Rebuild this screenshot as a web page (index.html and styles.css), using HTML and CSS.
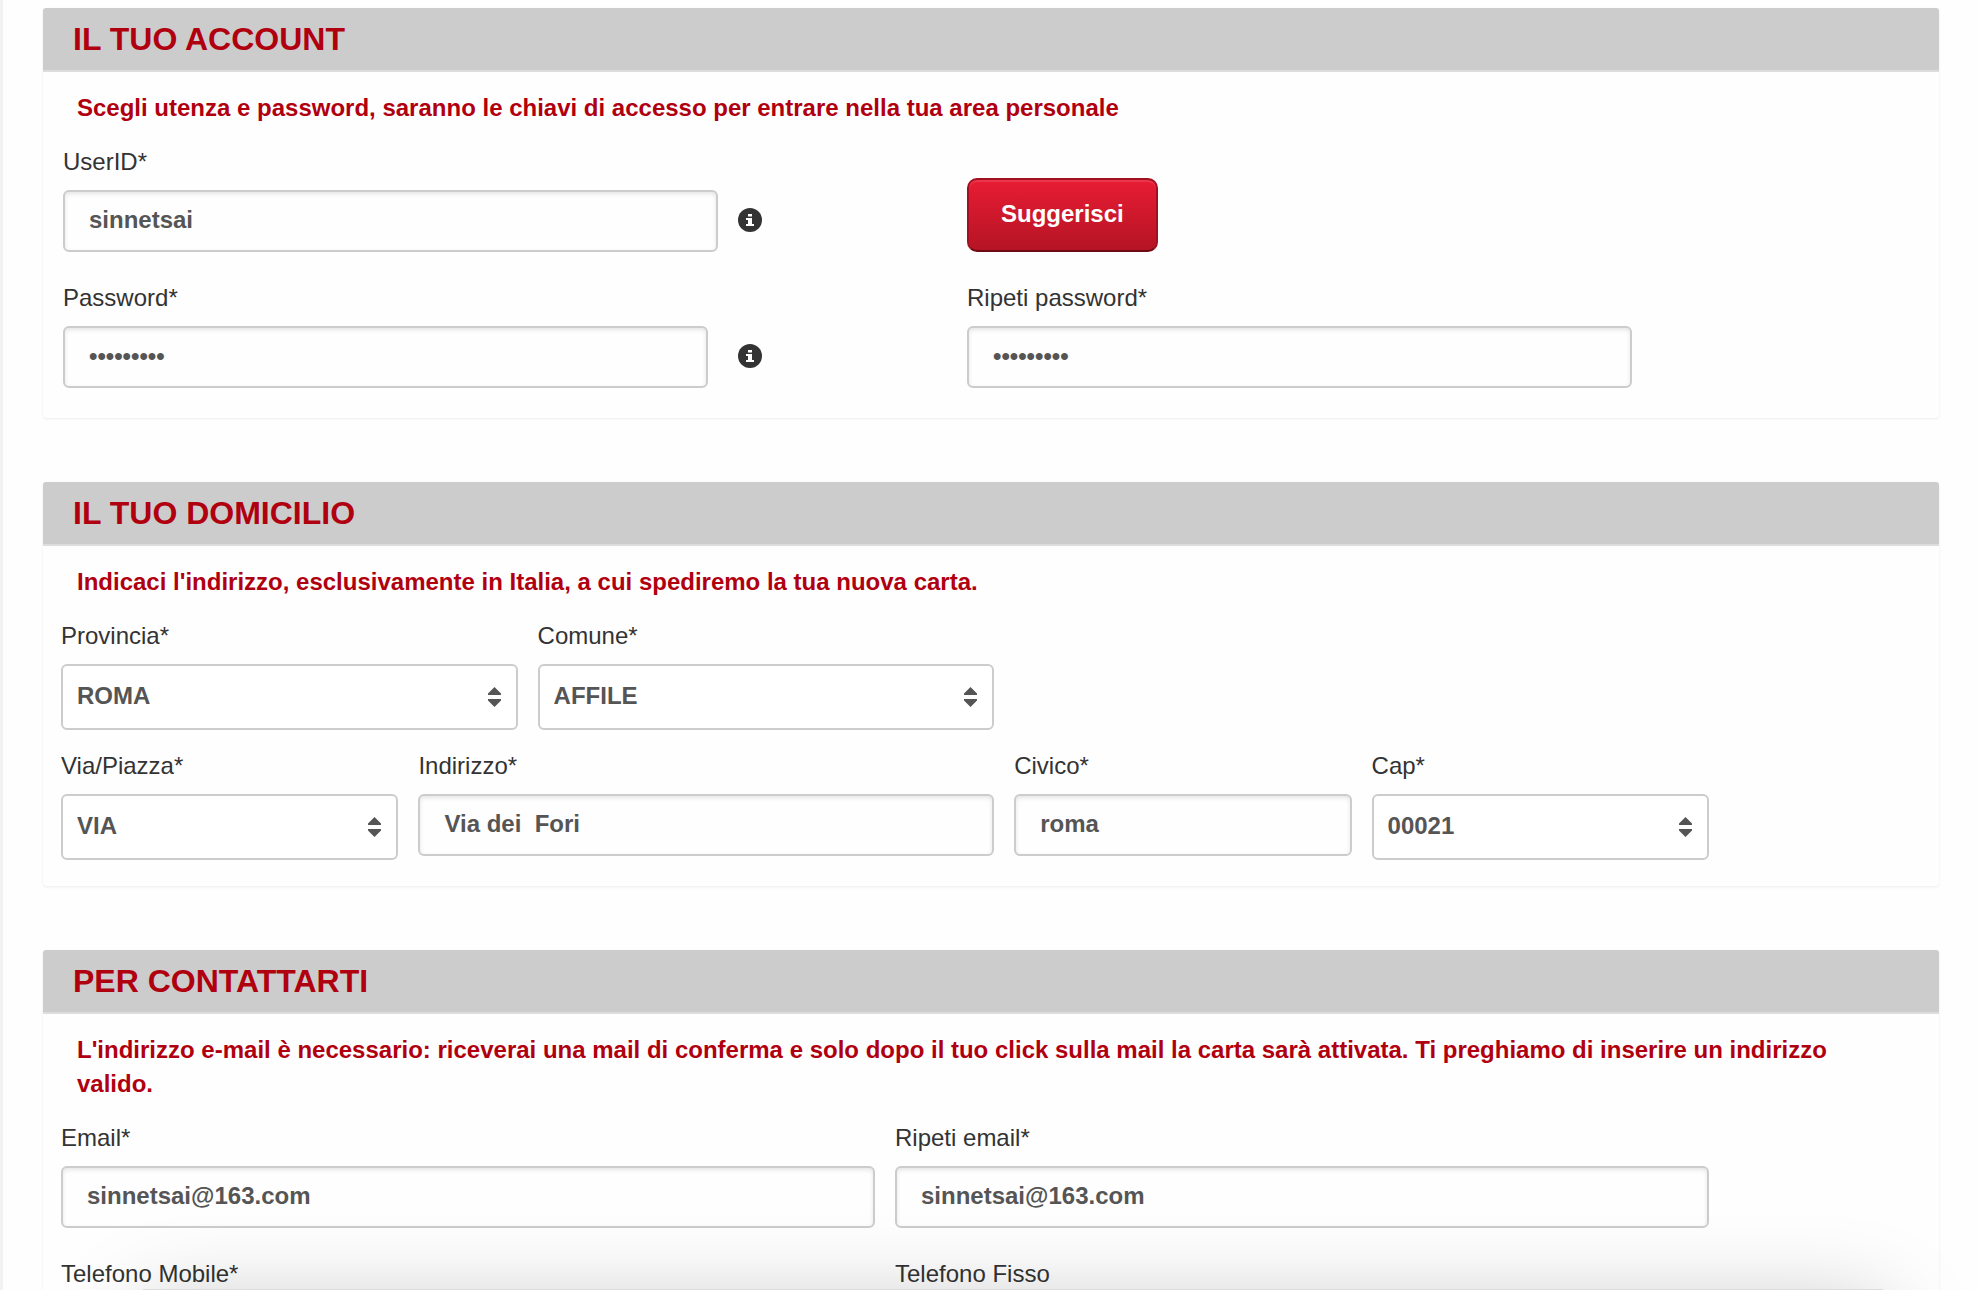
FILE: index.html
```html
<!DOCTYPE html>
<html lang="it">
<head>
<meta charset="utf-8">
<title>Registrazione</title>
<meta name="viewport" content="width=device-width, initial-scale=1">
<link rel="stylesheet" href="styles.css">
</head>
<body>
<svg class="sprite" aria-hidden="true">
  <symbol id="arrows" viewBox="0 0 13 20">
    <path d="M6.5 0 13 6.5V8H0V6.5zM6.5 20 0 13.500V12h13v1.500z"/>
  </symbol>
  <symbol id="info" viewBox="0 0 24 24">
    <circle cx="12" cy="12" r="12"/>
    <path class="info-mark" d="M10 6h4v2.500h-4zM8 10h6v6h2v2H8v-2h2v-4H8z"/>
  </symbol>
</svg>

<form class="page">
  <section class="panel">
    <h2 class="panel-title">IL TUO ACCOUNT</h2>
    <p class="note">Scegli utenza e password, saranno le chiavi di accesso per entrare nella tua area personale</p>
    <div class="account-grid">
      <div class="field field-user">
        <label for="userid">UserID*</label>
        <input class="control" id="userid" type="text" value="sinnetsai">
      </div>
      <svg class="info" role="img" aria-label="Informazioni UserID"><use href="#info"/></svg>
      <button class="btn" type="button">Suggerisci</button>
      <div class="field field-password">
        <label for="password">Password*</label>
        <input class="control" id="password" type="password" value="sinnetsai">
      </div>
      <svg class="info" role="img" aria-label="Informazioni password"><use href="#info"/></svg>
      <div class="field">
        <label for="password2">Ripeti password*</label>
        <input class="control" id="password2" type="password" value="sinnetsai">
      </div>
    </div>
  </section>

  <section class="panel">
    <h2 class="panel-title">IL TUO DOMICILIO</h2>
    <p class="note">Indicaci l'indirizzo, esclusivamente in Italia, a cui spediremo la tua nuova carta.</p>
    <div class="form-grid">
      <div class="select-field span-4">
        <label for="provincia">Provincia*</label>
        <div class="select-box">
          <select id="provincia"><option>ROMA</option></select>
          <svg class="arrows" aria-hidden="true"><use href="#arrows"/></svg>
        </div>
      </div>
      <div class="select-field span-4">
        <label for="comune">Comune*</label>
        <div class="select-box">
          <select id="comune"><option>AFFILE</option></select>
          <svg class="arrows" aria-hidden="true"><use href="#arrows"/></svg>
        </div>
      </div>
    </div>
    <div class="form-grid">
      <div class="select-field span-3">
        <label for="via">Via/Piazza*</label>
        <div class="select-box">
          <select id="via"><option>VIA</option></select>
          <svg class="arrows" aria-hidden="true"><use href="#arrows"/></svg>
        </div>
      </div>
      <div class="field span-5">
        <label for="indirizzo">Indirizzo*</label>
        <input class="control" id="indirizzo" type="text" value="Via dei  Fori">
      </div>
      <div class="field span-3">
        <label for="civico">Civico*</label>
        <input class="control" id="civico" type="text" value="roma">
      </div>
      <div class="select-field span-3">
        <label for="cap">Cap*</label>
        <div class="select-box">
          <select id="cap"><option>00021</option></select>
          <svg class="arrows" aria-hidden="true"><use href="#arrows"/></svg>
        </div>
      </div>
    </div>
  </section>

  <section class="panel">
    <h2 class="panel-title">PER CONTATTARTI</h2>
    <p class="note">L'indirizzo e-mail è necessario: riceverai una mail di conferma e solo dopo il tuo click sulla mail la carta sarà attivata. Ti preghiamo di inserire un indirizzo valido.</p>
    <div class="form-grid">
      <div class="field span-7">
        <label for="email">Email*</label>
        <input class="control" id="email" type="email" value="sinnetsai@163.com">
      </div>
      <div class="field span-7">
        <label for="email2">Ripeti email*</label>
        <input class="control" id="email2" type="email" value="sinnetsai@163.com">
      </div>
      <div class="field span-7">
        <label for="mobile">Telefono Mobile*</label>
        <input class="control" id="mobile" type="tel">
      </div>
      <div class="field span-7">
        <label for="fisso">Telefono Fisso</label>
        <input class="control" id="fisso" type="tel">
      </div>
    </div>
  </section>
</form>
<div class="dock-shadow"></div>
</body>
</html>
```
FILE: styles.css
```css
* {
  box-sizing: border-box;
}

body {
  margin: 0;
  overflow: hidden;
  background: #fefefe;
  color: #333;
  font: 24px/34px "Liberation Sans", Arial, sans-serif;
}

.sprite {
  display: none;
}

.page {
  height: 100vh;
  padding: 8px 39px 0 40px;
  border-left: 3px solid #f2f2f2;
  overflow-y: auto;
  scrollbar-width: none;
}

.panel {
  margin-bottom: 64px;
  padding-bottom: 1px;
  border-radius: 4px;
  box-shadow: 0 1px 3px rgba(0, 0, 0, 0.07);
}

.panel-title {
  margin: 0;
  padding: 14px 30px;
  border-bottom: 2px solid #ddd;
  border-radius: 3px 3px 0 0;
  background: #ccc;
  color: #b0000f;
  font-size: 32px;
  line-height: 34px;
}

.note {
  margin: 19px 34px 20px;
  color: #b0000f;
  font-weight: bold;
}

.account-grid {
  display: grid;
  grid-template-columns: 675fr 229fr 665fr 307fr;
  margin-left: 20px;
}

.account-grid .field:last-child {
  grid-column: 3;
}

.field-user {
  padding-right: 20px;
}

.field-password {
  grid-column: 1;
  padding-right: 30px;
}

.form-grid {
  display: grid;
  grid-template-columns: repeat(14, 1fr);
  column-gap: 20px;
  max-width: 1648px;
  margin: 0 18px;
}

.span-3 { grid-column: span 3; }
.span-4 { grid-column: span 4; }
.span-5 { grid-column: span 5; }
.span-7 { grid-column: span 7; }

.field {
  margin-bottom: 29px;
}

.select-field {
  margin-bottom: 19px;
}

label {
  display: block;
  margin-bottom: 11px;
}

.control,
select {
  display: block;
  width: 100%;
  border: 2px solid #ccc;
  border-radius: 6px;
  background: #fff;
  color: #555;
  font: bold 24px/34px "Liberation Sans", Arial, sans-serif;
}

.control {
  height: 62px;
  padding: 0 24px 2px;
  background: transparent;
  box-shadow: inset 0 2px 4px rgba(0, 0, 0, 0.1);
}

select {
  height: 66px;
  padding: 0 40px 2px 14px;
  appearance: none;
}

.select-box {
  position: relative;
}

.arrows {
  position: absolute;
  top: 23px;
  right: 17px;
  width: 13px;
  height: 20px;
  fill: #555;
  pointer-events: none;
}

.info {
  align-self: end;
  width: 24px;
  height: 24px;
  margin-bottom: 49px;
  fill: #333;
}

.info-mark {
  fill: #fff;
}

.btn {
  align-self: end;
  justify-self: start;
  height: 74px;
  margin-bottom: 29px;
  padding: 0 32px 2px;
  border: 2px solid #a01020;
  border-bottom-color: #6d0b15;
  border-radius: 10px;
  background: linear-gradient(#e81c34, #b51424);
  box-shadow: inset 0 2px 1px rgba(255, 255, 255, 0.12);
  color: #fff;
  font: bold 24px/34px "Liberation Sans", Arial, sans-serif;
}

/* soft shade rising from the bottom edge of the window */
.dock-shadow {
  position: fixed;
  right: 95px;
  bottom: -199px;
  left: 143px;
  height: 200px;
  background: #ddd;
  box-shadow: 0 20px 90px rgba(0, 0, 0, 0.25);
  pointer-events: none;
}
```
